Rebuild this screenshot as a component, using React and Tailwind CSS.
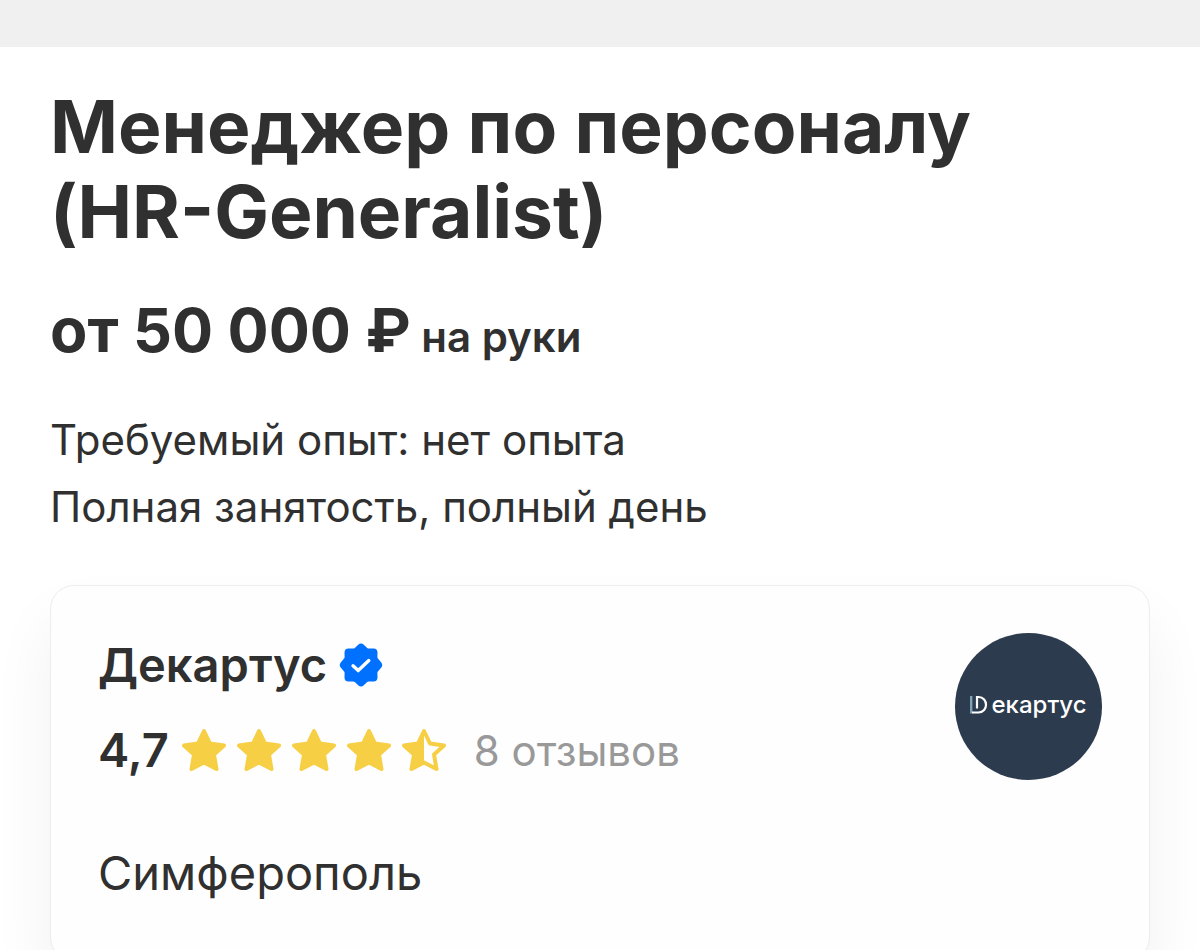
import React from 'react'

const STAR = 'M22 3 L28 15.5 L42 17.5 L32 26.5 L34.5 41 L22 34.5 L9.5 41 L12 26.5 L2 17.5 L16 15.5 Z'

function Star({ half }) {
  return (
    <svg viewBox="0 0 44 44" className="h-11 w-11" aria-hidden="true">
      {half ? (
        <>
          <path d={STAR} fill="none" stroke="#f6cf45" strokeWidth="4" strokeLinejoin="round" />
          <path d="M22 3 L22 34.5 L9.5 41 L12 26.5 L2 17.5 L16 15.5 Z" fill="#f6cf45" />
        </>
      ) : (
        <path d={STAR} fill="#f6cf45" stroke="#f6cf45" strokeWidth="4" strokeLinejoin="round" />
      )}
    </svg>
  )
}

function VerifiedBadge() {
  return (
    <svg viewBox="0 0 44 44" className="h-11 w-11" role="img" aria-label="Проверенная компания">
      <path
        d="M19.2 1.8 Q22 -.6 24.8 1.8 L28.2 5 Q29 5.7 30.2 5.6 L34.5 5.4 Q38.4 5.4 38.5 9.5 L38.4 13.8 Q38.3 15 39.1 15.8 L42.1 19.2 Q44.4 22 42.1 24.8 L39.1 28.2 Q38.3 29 38.4 30.2 L38.5 34.5 Q38.4 38.5 34.5 38.6 L30.2 38.4 Q29 38.3 28.2 39 L24.8 42.2 Q22 44.6 19.2 42.2 L15.8 39 Q15 38.3 13.8 38.4 L9.5 38.6 Q5.6 38.5 5.5 34.5 L5.6 30.2 Q5.7 29 4.9 28.2 L1.9 24.8 Q-.4 22 1.9 19.2 L4.9 15.8 Q5.7 15 5.6 13.8 L5.5 9.5 Q5.6 5.4 9.5 5.4 L13.8 5.6 Q15 5.7 15.8 5 Z"
        fill="#0070ff"
      />
      <path d="M14 22.8 L19.2 27.6 L29.8 17.6" fill="none" stroke="#fff" strokeWidth="3.4" strokeLinecap="round" strokeLinejoin="round" />
    </svg>
  )
}

function CompanyLogo() {
  return (
    <div className="flex h-[147px] w-[147px] items-center justify-center rounded-full bg-[#2d3b4e] pb-1 text-white">
      <svg viewBox="0 0 18 20" className="h-5 w-[18px]" aria-hidden="true">
        <path d="M1.2 1 V18.5" stroke="#7fa3b5" strokeWidth="2.4" fill="none" />
        <path d="M7 13.5 V2 H8.5 C18.5 2 18.5 17.5 8.5 17.5 H2" stroke="#fff" strokeWidth="2.2" fill="none" />
      </svg>
      <span className="ml-[3px] text-[24px] leading-6 font-medium">екартус</span>
    </div>
  )
}

export default function App() {
  return (
    <div className="h-screen overflow-hidden bg-white font-['Inter',sans-serif] text-[#303030]">
      <div className="h-[47px] bg-[#f0f0f0]" />
      <main className="px-[50px] pt-[37px]">
        <h1 className="text-[73px] leading-[85px] font-bold">
          Менеджер по персоналу<br />(HR-Generalist)
        </h1>
        <p className="mt-10 text-[61px] leading-[72px] font-bold">
          от 50 000 ₽<span className="text-[42px] font-semibold"> на руки</span>
        </p>
        <div className="mt-[33px] text-[42px] leading-[67px]">
          <p>Требуемый опыт: нет опыта</p>
          <p>Полная занятость, полный день</p>
        </div>
        <section className="mt-[45px] rounded-3xl border border-[#ededed] bg-[#fefefe] px-[47px] pt-[47px] pb-[53px] shadow-[0_36px_64px_rgba(0,0,0,0.06)]">
          <div className="flex items-start justify-between">
            <div>
              <h2 className="flex items-center gap-3 text-[47px] leading-[64px] font-semibold">
                Декартус <VerifiedBadge />
              </h2>
              <div className="mt-[21px] flex items-center">
                <span className="text-[47px] leading-[64px] font-semibold">4,7</span>
                <div className="ml-[13px] flex gap-[11px]">
                  <Star /><Star /><Star /><Star /><Star half />
                </div>
                <a href="#reviews" className="ml-7 text-[42px] text-[#999]">8 отзывов</a>
              </div>
            </div>
            <CompanyLogo />
          </div>
          <p className="mt-[57px] text-[47px] leading-[68px]">Симферополь</p>
        </section>
      </main>
    </div>
  )
}
